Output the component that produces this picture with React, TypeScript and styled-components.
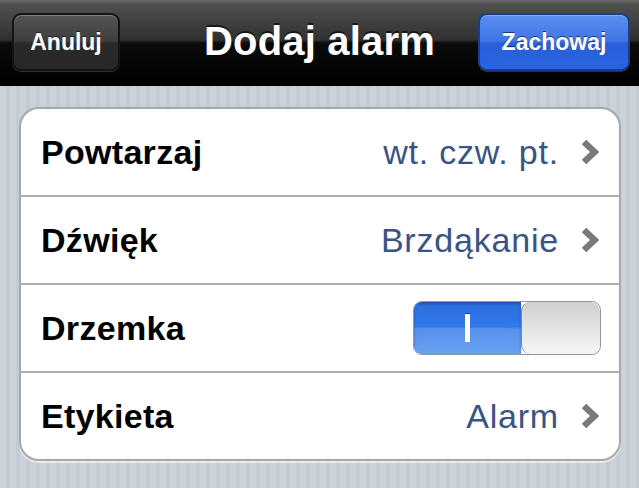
import React from "react";
import styled, { createGlobalStyle } from "styled-components";

const Global = createGlobalStyle`
  html, body {
    margin: 0;
    padding: 0;
    width: 639px;
    height: 488px;
    overflow: hidden;
    font-family: "Liberation Sans", Helvetica, Arial, sans-serif;
  }
  #root { height: 488px; }
`;

const Screen = styled.div`
  width: 639px;
  height: 488px;
  display: flex;
  flex-direction: column;
  background: repeating-linear-gradient(
    90deg,
    #cbd2d9 0px,
    #cbd2d9 6px,
    #c4cbd3 6px,
    #c4cbd3 10px
  );
`;

const NavBar = styled.div`
  height: 86px;
  flex: none;
  display: flex;
  align-items: center;
  justify-content: space-between;
  padding: 0 9px 0 12px;
  box-sizing: border-box;
  position: relative;
  background: linear-gradient(
    180deg,
    #6e6e6e 0px,
    #505050 4px,
    #303030 40px,
    #0a0a0a 43px,
    #000 86px
  );
  border-bottom: 2px solid #000;
`;

const Title = styled.div`
  position: absolute;
  left: 0;
  right: 0;
  top: 0;
  bottom: 0;
  display: flex;
  align-items: center;
  justify-content: center;
  color: #fff;
  font-weight: 700;
  font-size: 40px;
  letter-spacing: 0.2px;
  text-shadow: 0 -2px 0 rgba(0, 0, 0, 0.6);
  pointer-events: none;
  padding-bottom: 2px;
`;

const NavButton = styled.button<{ $primary?: boolean }>`
  position: relative;
  z-index: 1;
  height: 58px;
  width: ${(p) => (p.$primary ? "152px" : "108px")};
  border-radius: 9px;
  font-family: "Liberation Sans", Helvetica, Arial, sans-serif;
  font-weight: 700;
  font-size: 23px;
  color: #fff;
  text-shadow: 0 -1px 0 rgba(0, 0, 0, 0.55);
  border: 2px solid ${(p) => (p.$primary ? "#1a3f86" : "#141414")};
  box-shadow: 0 1px 0 rgba(255, 255, 255, 0.18),
    inset 0 1px 0 rgba(255, 255, 255, 0.25);
  background: ${(p) =>
    p.$primary
      ? "linear-gradient(180deg, #5b8ef0 0%, #3f76e6 48%, #2860dc 52%, #2a64e0 100%)"
      : "linear-gradient(180deg, #555 0%, #3e3e3e 48%, #2a2a2a 52%, #282828 100%)"};
  padding: 0;
  display: flex;
  align-items: center;
  justify-content: center;
`;

const Content = styled.div`
  padding: 21px 18px 0 19px;
`;

const Group = styled.div`
  background: #fff;
  border: 2px solid #a6a8ab;
  border-radius: 20px;
  overflow: hidden;
  box-shadow: 0 2px 0 rgba(255, 255, 255, 0.6);
`;

const Row = styled.div<{ $first?: boolean }>`
  height: 86px;
  display: flex;
  align-items: center;
  justify-content: space-between;
  padding: 0 20px 0 20px;
  border-top: ${(p) => (p.$first ? "none" : "2px solid #acaeb0")};
`;

const Label = styled.span`
  color: #000;
  font-weight: 700;
  font-size: 34px;
  letter-spacing: 0.3px;
`;

const Detail = styled.div`
  display: flex;
  align-items: center;
  gap: 22px;
`;

const Value = styled.span`
  color: #385487;
  font-size: 34px;
  font-weight: 400;
  letter-spacing: 0.8px;
`;

const ChevronSvg = styled.svg`
  flex: none;
  display: block;
  width: 18px;
  height: 26px;
`;

const Chevron = () => (
  <ChevronSvg viewBox="0 0 18 26" aria-hidden>
    <polyline
      points="3,3 13.5,13 3,23"
      fill="none"
      stroke="#7a7a7a"
      strokeWidth="6.5"
      strokeLinejoin="miter"
      strokeLinecap="butt"
    />
  </ChevronSvg>
);

const Switch = styled.div`
  width: 188px;
  height: 54px;
  border-radius: 9px;
  border: 1px solid #8f97a3;
  box-sizing: border-box;
  display: flex;
  overflow: hidden;
  margin-right: -2px;
`;

const SwitchOn = styled.div`
  flex: none;
  width: 107px;
  display: flex;
  align-items: center;
  justify-content: center;
  background: linear-gradient(
    180deg,
    #2a6ddf 0%,
    #3179e9 48%,
    #5591ec 52%,
    #6aa0f0 100%
  );
  box-shadow: inset 0 2px 3px rgba(0, 0, 0, 0.25);
`;

const OnMark = styled.div`
  width: 5px;
  height: 28px;
  background: #fff;
  box-shadow: 0 -1px 0 rgba(0, 0, 0, 0.35);
`;

const Knob = styled.div`
  flex: 1;
  border-left: 1px solid #8a8a8a;
  border-radius: 9px;
  background: linear-gradient(180deg, #cfcfcf 0%, #e6e6e6 60%, #f6f6f6 100%);
`;

const rows = [
  { label: "Powtarzaj", value: "wt. czw. pt." },
  { label: "Dźwięk", value: "Brzdąkanie" },
  { label: "Drzemka", toggle: true },
  { label: "Etykieta", value: "Alarm" },
];

export default function App() {
  return (
    <>
      <Global />
      <Screen>
        <NavBar>
          <NavButton>Anuluj</NavButton>
          <Title>Dodaj alarm</Title>
          <NavButton $primary>Zachowaj</NavButton>
        </NavBar>
        <Content>
          <Group>
            {rows.map((r, i) => (
              <Row key={r.label} $first={i === 0}>
                <Label>{r.label}</Label>
                {r.toggle ? (
                  <Switch>
                    <SwitchOn>
                      <OnMark />
                    </SwitchOn>
                    <Knob />
                  </Switch>
                ) : (
                  <Detail>
                    <Value>{r.value}</Value>
                    <Chevron />
                  </Detail>
                )}
              </Row>
            ))}
          </Group>
        </Content>
      </Screen>
    </>
  );
}
